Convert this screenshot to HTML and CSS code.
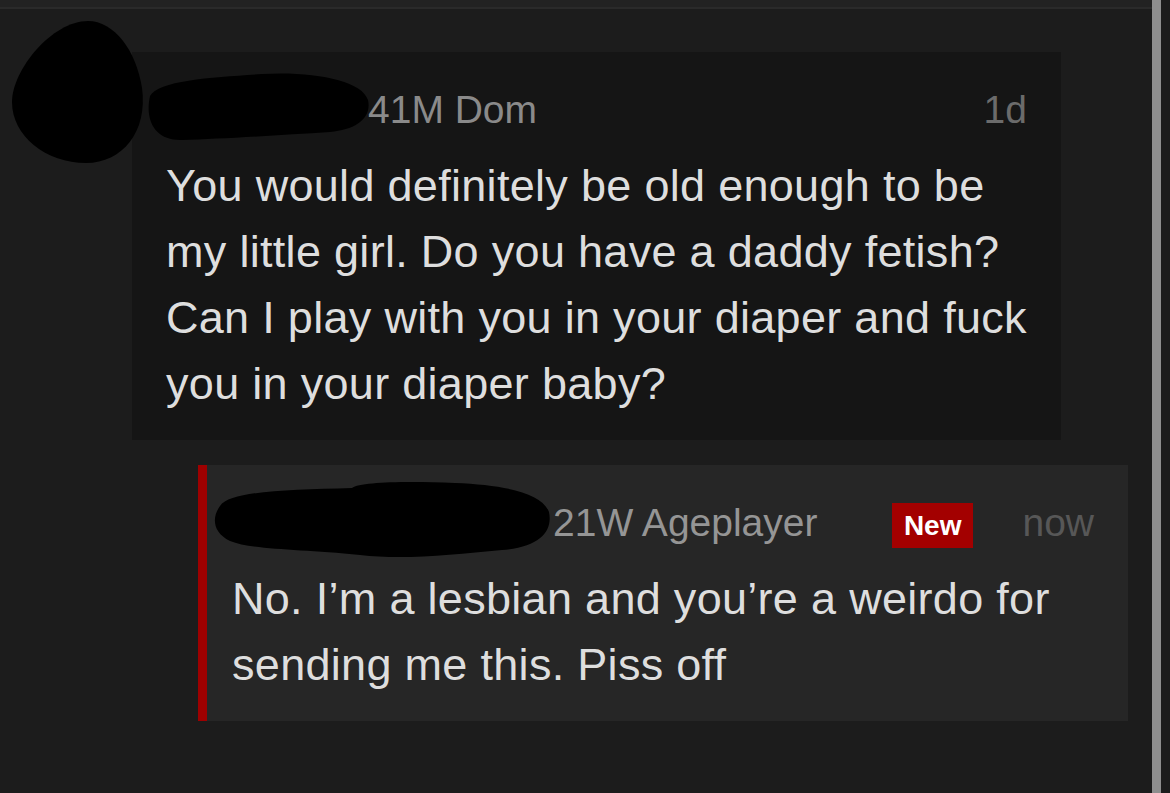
FILE: index.html
```html
<!DOCTYPE html>
<html lang="en">
<head>
<meta charset="utf-8">
<title>Comments</title>
<link rel="stylesheet" href="styles.css">
</head>
<body>
<div class="screen">
  <div class="topbar"></div>
  <main class="thread">
    <article class="comment comment--parent">
      <div class="meta">
        <span class="name name--parent"></span>
        <span class="handle">41M Dom</span>
        <span class="time">1d</span>
      </div>
      <p class="text">You would definitely be old enough to be<br>my little girl. Do you have a daddy fetish?<br>Can I play with you in your diaper and fuck<br>you in your diaper baby?</p>
    </article>
    <article class="comment comment--reply">
      <div class="meta">
        <span class="name name--reply"></span>
        <span class="handle handle--reply">21W Ageplayer</span>
        <span class="badge">New</span>
        <span class="time time--now">now</span>
      </div>
      <p class="text">No. I’m a lesbian and you’re a weirdo for<br>sending me this. Piss off</p>
    </article>
  </main>
</div>
<div class="scrollbar"></div>
<svg class="redactions" viewBox="0 0 1170 793" width="1170" height="793" aria-hidden="true">
  <path d="M88 21 C114 21 136 50 142 88 C148 132 122 163 86 163 C46 163 12 136 12 102 C12 70 52 21 88 21 Z"/>
  <path d="M150 96 C158 80 215 77 262 74 C312 71 362 80 368 100 C372 118 356 130 330 132 C282 135 222 139 182 140 C158 141 144 124 150 96 Z"/>
  <path d="M220 506 C230 491 285 490 352 488 C360 482 405 481 455 483 C505 485 542 493 549 512 C553 531 540 547 502 550 C452 555 402 560 360 555 C300 549 252 550 230 541 C212 532 212 517 220 506 Z"/>
</svg>
</body>
</html>
```
FILE: styles.css
```css
html, body {
  margin: 0;
  padding: 0;
}

body {
  display: flex;
  width: 1170px;
  height: 793px;
  overflow: hidden;
  background: #1c1c1c;
  font-family: "Liberation Sans", Arial, Helvetica, sans-serif;
  position: relative;
}

.screen {
  flex: 1;
  display: flex;
  flex-direction: column;
}

.topbar {
  height: 7px;
  background: #222222;
  border-bottom: 2px solid #2a2a2a;
}

.thread {
  display: flex;
  flex-direction: column;
  align-items: flex-start;
  gap: 25px;
  padding-top: 43px;
}

.comment {
  box-sizing: border-box;
  padding: 34px 34px 23px 34px;
}

.comment--parent {
  margin-left: 132px;
  width: 929px;
  background: #151515;
}

.comment--reply {
  margin-left: 198px;
  width: 930px;
  background: #262626;
  border-left: 9px solid #9e0000;
  padding-left: 25px;
}

.meta {
  display: flex;
  align-items: center;
  height: 48px;
  font-size: 39px;
  line-height: 48px;
  margin-bottom: 19px;
  white-space: nowrap;
}

.name {
  flex: none;
  height: 48px;
}

.name--parent {
  width: 202px;
}

.name--reply {
  width: 321px;
}

.handle {
  color: #8a8a8a;
}

.handle--reply {
  color: #959595;
}

.time {
  margin-left: auto;
  color: #6b6b6b;
}

.time--now {
  margin-left: 49px;
  color: #575757;
}

.badge {
  margin-left: auto;
  margin-top: 5px;
  height: 45px;
  line-height: 45px;
  padding: 0 12px;
  background: #a30000;
  color: #ffffff;
  font-size: 28px;
  font-weight: bold;
}

.text {
  margin: 0;
  font-size: 45px;
  line-height: 66px;
  letter-spacing: 0.3px;
  color: #dedede;
  white-space: nowrap;
}

.scrollbar {
  flex: none;
  width: 9px;
  margin-right: 9px;
  background: #8e8e8e;
}

.redactions {
  position: absolute;
  top: 0;
  left: 0;
  pointer-events: none;
  fill: #000000;
}
```
